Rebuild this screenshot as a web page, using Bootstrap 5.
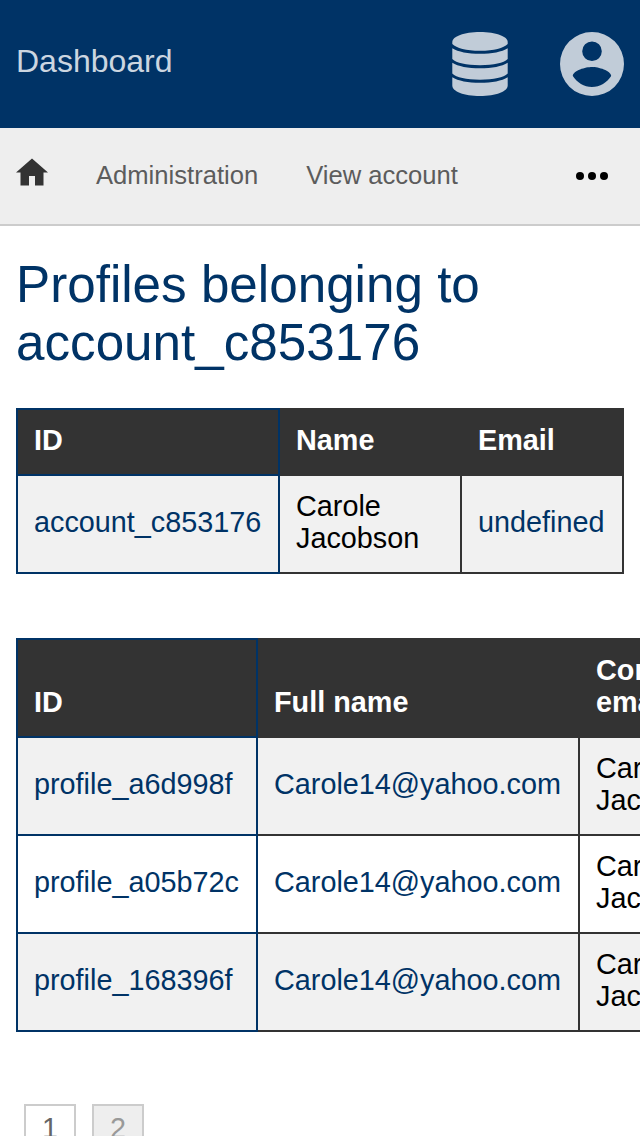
<!DOCTYPE html>
<html lang="en">
<head>
<meta charset="utf-8">
<meta name="viewport" content="width=device-width, initial-scale=1">
<title>Dashboard</title>
<link href="https://cdn.jsdelivr.net/npm/bootstrap@5.3.0/dist/css/bootstrap.min.css" rel="stylesheet">
<style>
html, body { height: 100%; }
body { font-family: "Liberation Sans", Arial, sans-serif; font-size: 28.8px; line-height: 32px; color: #000; background: #fff; }
a { text-decoration: none; }
.site-header { height: 128px; background: #036; }
.site-title { font-size: 32px; line-height: 40px; color: #ccd6e0; margin-top: -6px; }
.header-icons { gap: 52px; }
.sub-nav { height: 98px; background: #eee; border-bottom: 2px solid #ccc; font-size: 25.6px; }
.sub-nav .nav-text { color: #5c5c5c; margin-top: -2px; }
.home-link { margin: -9px 48px 0 0; }
.more-btn { margin-right: 16px; }
.page-title { font-size: 51.2px; line-height: 58px; color: #036; padding-top: 30px; margin: 0 0 36px; font-weight: 400; }
.table.data-grid { table-layout: fixed; border-collapse: collapse; margin: 0; color: #000; }
.table.data-grid > * > tr > * { border: 2px solid #333; padding: 14px 16px 18px; box-shadow: none; background: transparent; color: #000; vertical-align: middle; }
.table.data-grid > thead > tr { background: #333; }
.table.data-grid > thead > tr > th { color: #fff; vertical-align: bottom; }
.table.data-grid > tbody > tr:nth-child(odd) { background: #f1f1f1; }
.table.data-grid > * > tr > :first-child { border-color: #036; }
.data-grid td { white-space: nowrap; }
.data-grid a { color: #036; }
.table.data-grid.accounts { width: 608px; margin-bottom: 64px; }
.table.data-grid.profiles { width: 764px; }
.pager { margin: 72px 8px 0; gap: 16px; }
.pager a { border: 2px solid #ccc; padding: 6px 16px; color: #666; }
.pager .other { background: #eee; color: #999; }
</style>
</head>
<body class="overflow-hidden">
<header class="site-header d-flex align-items-center justify-content-between px-3">
  <a href="#" class="site-title">Dashboard</a>
  <div class="header-icons d-flex align-items-center">
    <a href="#" aria-label="Data"><svg class="d-block" width="56" height="64" viewBox="0 0 56 64" fill="#c1ccd8">
      <path d="M.3 10C.3 4.500 12 0 28 0s27.700 4.500 27.700 10V12C51.500 16 42 18.800 28 18.800S4.500 16 .3 12z"/>
      <path d="M.3 16.300C6 20 16 21.800 28 21.800S50 20 55.700 16.300V27C51.500 31 42 33.200 28 33.200S4.500 31 .3 27z"/>
      <path d="M.3 30.800C6 34.500 16 36.300 28 36.300S50 34.500 55.700 30.800V41.500C51.500 45.500 42 47.700 28 47.700S4.500 45.500 .3 41.500z"/>
      <path d="M.3 45.300C6 49 16 50.800 28 50.800S50 49 55.700 45.300V53.500C55.700 59.500 44 64 28 64S.3 59.500 .3 53.500z"/>
    </svg></a>
    <a href="#" aria-label="Account"><svg class="d-block" width="64" height="64" viewBox="0 0 64 64" fill="#c1ccd8" fill-rule="evenodd">
      <path d="M32 0a32 32 0 1 0 0 64 32 32 0 0 0 0-64zm0 9.400a9.800 9.800 0 1 1 0 19.600 9.800 9.800 0 0 1 0-19.600zM32 55c-8 0-15-4.500-19.200-11C13 38.300 25.600 34.900 32 34.900S51 38.300 51.200 44C47 50.500 40 55 32 55z"/>
    </svg></a>
  </div>
</header>
<nav class="sub-nav d-flex align-items-center px-3">
  <a href="#" class="home-link" aria-label="Home"><svg class="d-block" width="32" height="28" viewBox="0 0 32 28"><path fill="#333" d="M16 .5 32 14.500H27.500V27.500H19V18H13V27.500H4.500V14.500H0z"/></svg></a>
  <a href="#" class="nav-text me-5">Administration</a>
  <a href="#" class="nav-text">View account</a>
  <a href="#" class="more-btn ms-auto" aria-label="More"><svg class="d-block" width="32" height="8" viewBox="0 0 32 8"><circle cx="4" cy="4" r="4"/><circle cx="16" cy="4" r="4"/><circle cx="28" cy="4" r="4"/></svg></a>
</nav>
<main class="px-3">
  <h1 class="page-title">Profiles belonging to account_c853176</h1>
  <table class="table data-grid accounts">
    <colgroup><col style="width:262px"><col style="width:182px"><col style="width:162px"></colgroup>
    <thead><tr><th>ID</th><th>Name</th><th>Email</th></tr></thead>
    <tbody><tr><td><a href="#">account_c853176</a></td><td>Carole<br>Jacobson</td><td><a href="#">undefined</a></td></tr></tbody>
  </table>
  <table class="table data-grid profiles">
    <colgroup><col style="width:240px"><col style="width:322px"><col style="width:200px"></colgroup>
    <thead><tr><th>ID</th><th>Full name</th><th>Contact<br>email</th></tr></thead>
    <tbody>
      <tr><td><a href="#">profile_a6d998f</a></td><td><a href="#">Carole14@yahoo.com</a></td><td>Carole<br>Jacobson</td></tr>
      <tr><td><a href="#">profile_a05b72c</a></td><td><a href="#">Carole14@yahoo.com</a></td><td>Carole<br>Jacobson</td></tr>
      <tr><td><a href="#">profile_168396f</a></td><td><a href="#">Carole14@yahoo.com</a></td><td>Carole<br>Jacobson</td></tr>
    </tbody>
  </table>
  <nav class="pager d-flex" aria-label="Pages">
    <a href="#">1</a>
    <a href="#" class="other">2</a>
  </nav>
</main>
<script src="https://cdn.jsdelivr.net/npm/bootstrap@5.3.0/dist/js/bootstrap.bundle.min.js"></script>
</body>
</html>
